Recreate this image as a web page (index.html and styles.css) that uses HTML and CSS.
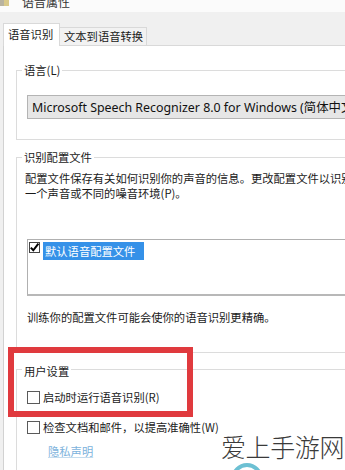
FILE: index.html
```html
<!DOCTYPE html>
<html lang="zh-CN">
<head>
<meta charset="utf-8">
<title>语音属性</title>
<link rel="stylesheet" href="styles.css">
</head>
<body>
<div class="screen">
  <div class="titlebar">
    <span class="ticon"></span>
    <span class="ttext">语音属性</span>
  </div>
  <div class="tabs">
    <div class="tab active">语音识别</div>
    <div class="tab">文本到语音转换</div>
  </div>
  <div class="panel">
    <div class="group g1">
      <div class="gtitle">语言(L)</div>
      <div class="combo">Microsoft Speech Recognizer 8.0 for Windows (简体中文 - 中国)</div>
    </div>
    <div class="group g2">
      <div class="gtitle">识别配置文件</div>
      <p class="desc">配置文件保存有关如何识别你的声音的信息。更改配置文件以识别另<br>一个声音或不同的噪音环境(P)。</p>
      <div class="listbox">
        <div class="item">
          <span class="cb small checked">
            <svg viewBox="0 0 11 11" width="11" height="11"><path d="M1.8 5.6 L4.3 8.3 L9.4 1.6" fill="none" stroke="#000" stroke-width="2"/></svg>
          </span>
          <span class="sel">默认语音配置文件</span>
        </div>
      </div>
      <p class="note">训练你的配置文件可能会使你的语音识别更精确。</p>
    </div>
    <div class="group g3">
      <div class="gtitle">用户设置</div>
      <div class="check first"><span class="cb"></span><span class="ctext">启动时运行语音识别(R)</span></div>
      <div class="check second"><span class="cb"></span><span class="ctext">检查文档和邮件，以提高准确性(W)</span></div>
      <a class="link" href="#">隐私声明</a>
    </div>
  </div>
  <div class="redbox"></div>
  <div class="watermark">爱上手游网</div>
  <div class="wm-logo"></div>
</div>
</body>
</html>
```
FILE: styles.css
```css
html, body {
  margin: 0;
  padding: 0;
}
body {
  background: #f0f0f0;
  font-family: "Noto Sans CJK SC", "Noto Sans", sans-serif;
  color: #1a1a1a;
}
.screen {
  position: relative;
  width: 345px;
  height: 470px;
  overflow: hidden;
  background: #f0f0f0;
}
.titlebar {
  height: 12px;
  background: #fbfbfb;
  overflow: hidden;
  display: flex;
  align-items: flex-start;
}
.ticon {
  width: 9px;
  height: 6px;
  background: linear-gradient(90deg, #b9b3a0 0 4px, #d9c98a 4px 9px);
  flex: none;
}
.ttext {
  margin-left: 13px;
  font-size: 12px;
  line-height: 4px;
  color: #333;
}
.tabs {
  display: flex;
  align-items: flex-end;
  height: 22px;
  margin-top: 11px;
  padding-left: 3px;
  position: relative;
  z-index: 1;
}
.tab {
  box-sizing: border-box;
  border: 1px solid #d9d9d9;
  border-bottom: none;
  font-size: 11.3px;
  white-space: nowrap;
}
.tab.active {
  width: 57px;
  height: 23px;
  background: #fff;
  line-height: 21px;
  padding-left: 4px;
  margin-bottom: -1px;
}
.tab:not(.active) {
  width: 87px;
  height: 18px;
  background: #f2f2f2;
  line-height: 16px;
  padding-left: 4px;
  border-left: none;
}
.panel {
  margin-left: 3px;
  background: #fff;
  border-left: 1px solid #d2d2d2;
  border-top: 1px solid #d9d9d9;
  height: 460px;
  padding-top: 0.1px;
}
.group {
  margin-left: 12px;
  border: 1px solid #dcdcdc;
  border-right: none;
  font-size: 11.3px;
  white-space: nowrap;
}
.gtitle {
  width: fit-content;
  height: 14px;
  line-height: 14px;
  margin: -8px 0 0 5px;
  padding: 0 2px;
  background: #fff;
}
.g1 {
  margin-top: 24px;
  padding-bottom: 20px;
}
.combo {
  box-sizing: border-box;
  height: 24px;
  margin: 18px 0 0 10px;
  background: #e6e6e6;
  border: 1px solid #b4b4b4;
  border-right: none;
  padding-left: 4px;
  line-height: 23px;
  font-family: "Noto Sans", "Noto Sans CJK SC", sans-serif;
  font-size: 12.4px;
  color: #111;
}
.g2 {
  margin-top: 17px;
  padding-bottom: 27px;
}
.desc, .note {
  margin: 7px 0 0 8px;
  line-height: 15px;
}
.note {
  margin: 14px 0 0 10px;
}
.listbox {
  box-sizing: border-box;
  height: 57px;
  margin: 38px 0 0 10px;
  border: 1px solid #b0b0b0;
  border-right: none;
  border-bottom: 2px solid #b8b8b8;
  padding: 2px 0 0 1px;
}
.item {
  display: flex;
  align-items: flex-start;
  gap: 3px;
}
.cb {
  box-sizing: border-box;
  width: 13px;
  height: 13px;
  border: 1px solid #5a5a5a;
  background: #fff;
  flex: none;
  display: block;
}
.cb.small {
  width: 11px;
  height: 11px;
  border-color: #444;
  position: relative;
}
.cb.small svg {
  position: absolute;
  left: -1px;
  top: -1px;
}
.sel {
  background: #3591e8;
  color: #fff;
  height: 18px;
  line-height: 18px;
  padding: 0 9px 0 2px;
}
.g3 {
  margin-top: 16px;
  padding-bottom: 40px;
}
.g3 .gtitle {
  margin-top: -6px;
}
.check {
  display: flex;
  align-items: center;
  gap: 3px;
  height: 13px;
  margin-left: 10px;
}
.check.first {
  margin-top: 13px;
}
.check.second {
  margin-top: 17px;
}
.ctext {
  line-height: 13px;
}
.link {
  display: block;
  width: fit-content;
  margin: 10px 0 0 31px;
  line-height: 14px;
  color: #7cb2dc;
  text-decoration: underline;
  text-decoration-color: #c4dcee;
}
.redbox {
  position: absolute;
  left: 8px;
  top: 347px;
  width: 185px;
  height: 70px;
  box-sizing: border-box;
  border: 6px solid #e03a3e;
}
.watermark {
  position: absolute;
  left: 221px;
  top: 430px;
  font-size: 25px;
  line-height: 32px;
  font-weight: 300;
  color: #3a3a3a;
  letter-spacing: -0.4px;
  text-shadow: 0 0 2px #fff, 0 0 3px #fff;
  white-space: nowrap;
}
.wm-logo {
  position: absolute;
  left: 231px;
  top: 463px;
  width: 32px;
  height: 32px;
  box-sizing: border-box;
  border-radius: 50%;
  border: 4px solid #6cc0d3;
  background: radial-gradient(circle at 50% 30%, #ffffff 0 45%, #cdeaf1 80%);
}
```
